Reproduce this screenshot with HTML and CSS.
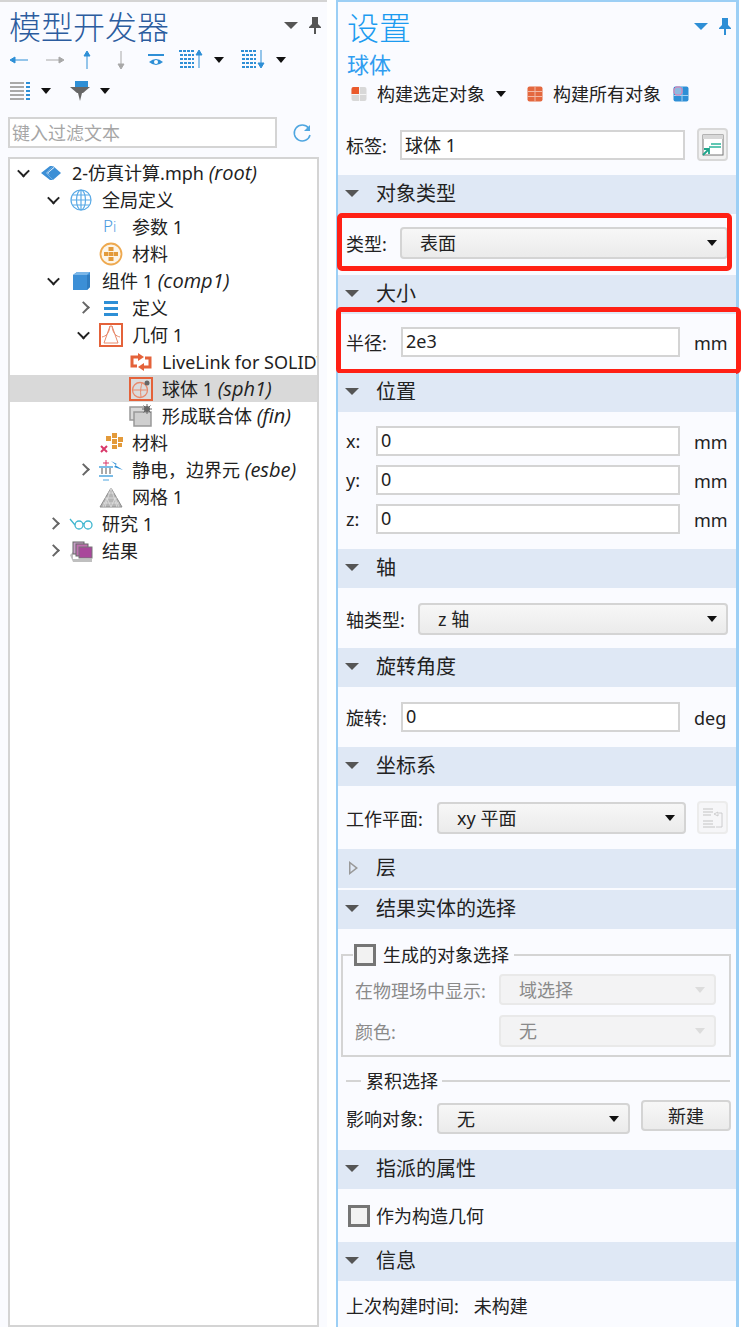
FILE: index.html
```html
<!DOCTYPE html>
<html lang="zh-CN">
<head>
    <meta charset="UTF-8">
    <title>模型开发器</title>
    <link rel="stylesheet" href="styles.css">
</head>
<body>
    <!-- Model builder -->
    <aside class="builder">
        <div class="panel-head">
            <h1 class="title title-dark">模型开发器</h1>
            <span class="head-caret"></span>
            <svg class="pin" width="12" height="17" viewBox="0 0 12 17"><path d="M3 0h6v7l3 3v1H7v6H5v-6H0v-1l3-3z" fill="#555"/></svg>
        </div>
        <div class="nav-tools">
            <svg class="nav-ic" width="18" height="10" viewBox="0 0 18 10"><path d="M18 5H5M5 5V2L0 5l5 3z" stroke="#2e8fd6" fill="#2e8fd6"/></svg>
            <svg class="nav-ic" width="18" height="10" viewBox="0 0 18 10"><path d="M0 5h13M13 5V2l5 3-5 3z" stroke="#a8a8a8" fill="#a8a8a8"/></svg>
            <svg class="nav-ic" width="10" height="18" viewBox="0 0 10 18"><path d="M5 18V5M5 5H2l3-5 3 5z" stroke="#2e8fd6" fill="#2e8fd6"/></svg>
            <svg class="nav-ic" width="10" height="18" viewBox="0 0 10 18"><path d="M5 0v13M5 13H2l3 5 3-5z" stroke="#a8a8a8" fill="#a8a8a8"/></svg>
            <svg class="nav-ic" width="16" height="12" viewBox="0 0 16 12"><path d="M0 0h16v2H0z" fill="#2e8fd6"/><path d="M1 8q7-6 14 0q-7 6-14 0z" fill="#2e8fd6"/><circle cx="8" cy="8" r="2" fill="#fff"/></svg>
            <span class="drop">
                <svg width="25" height="20" viewBox="0 0 25 20"><path d="M0 1h15M1 5h14M1 9h14M1 13h14M1 17h14" stroke="#2e8fd6" stroke-width="2" stroke-dasharray="3 1"/><path d="M20 18V5M20 5h-3l3-5 3 5z" stroke="#2e8fd6" fill="#2e8fd6"/></svg>
                <i class="caret"></i>
            </span>
            <span class="drop">
                <svg width="25" height="20" viewBox="0 0 25 20"><path d="M0 1h15M1 5h14M1 9h14M1 13h14M1 17h14" stroke="#2e8fd6" stroke-width="2" stroke-dasharray="3 1"/><path d="M20 0v13M20 13h-3l3 5 3-5z" stroke="#2e8fd6" fill="#2e8fd6"/></svg>
                <i class="caret"></i>
            </span>
            <span class="drop">
                <svg width="21" height="18" viewBox="0 0 21 18"><path d="M0 1h14M0 5h14M0 9h14M0 13h14M0 17h14" stroke="#a9a9a9" stroke-width="2"/><path d="M16 1h4M16 5h4M16 9h4M16 13h4M16 17h4" stroke="#2e8fd6" stroke-width="2"/></svg>
                <i class="caret"></i>
            </span>
            <span class="drop drop-filter">
                <svg width="20" height="20" viewBox="0 0 20 20"><path d="M5 0h13v6H5z" fill="#2e8fd6"/><path d="M0 6h20l-7 6H7z" fill="#666"/><path d="M8 12h4l-2 8z" fill="#666"/></svg>
                <i class="caret"></i>
            </span>
        </div>
        <div class="filter">
            <input class="filter-input" type="text" placeholder="键入过滤文本">
            <svg width="20" height="20" viewBox="0 0 20 20"><path d="M16.500 5A8 8 0 1 0 18 12" fill="none" stroke="#4fa6e0" stroke-width="1.500"/><path d="M18 2v6h-6z" fill="#4fa6e0"/></svg>
        </div>

        <div class="tree">
            <div class="node d0">
                <i class="chev open"></i>
                <svg class="node-ic" width="24" height="16" viewBox="0 0 24 16"><path d="M2 8l9-7 3 0-7 7 7 7h-3z" fill="#3c8fd6"/><path d="M14 1l8 7-8 7-7-7z" fill="#3c8fd6"/><path d="M8 8l7-6v1l-6 5 2 2z" fill="#fff"/></svg>
                <span>2-仿真计算.mph <em>(root)</em></span>
            </div>
            <div class="node d1">
                <i class="chev open"></i>
                <svg class="node-ic" width="24" height="24" viewBox="0 0 24 24"><g fill="none" stroke="#5aaae6" stroke-width="1.200"><circle cx="12" cy="12" r="10"/><ellipse cx="12" cy="12" rx="4.500" ry="10"/><path d="M12 2v20M2 12h20M3.500 7h17M3.500 17h17"/></g></svg>
                <span>全局定义</span>
            </div>
            <div class="node d2">
                <i class="chev none"></i>
                <span class="node-ic pi">P<small>i</small></span>
                <span>参数 1</span>
            </div>
            <div class="node d2">
                <i class="chev none"></i>
                <svg class="node-ic" width="24" height="24" viewBox="0 0 24 24"><circle cx="12" cy="12" r="10.500" fill="#fdf5e8" stroke="#eea94f" stroke-width="1.800"/><path d="M9.500 5h5v4h-5zM5 10h4.500v4H5zM10 10h4v4h-4zM14.500 10H19v4h-4.500zM9.500 15h5v4h-5z" fill="#e39a3a"/></svg>
                <span>材料</span>
            </div>
            <div class="node d1">
                <i class="chev open"></i>
                <svg class="node-ic" width="24" height="24" viewBox="0 0 24 24"><path d="M4 6l4-3h13v15l-3 3H4z" fill="#3c8fd6"/><path d="M4 6l4-3h13l-3 3z" fill="#7ab6e8"/><path d="M18 6h3v12l-3 3z" fill="#2f7cc0"/></svg>
                <span>组件 1 <em>(comp1)</em></span>
            </div>
            <div class="node d2">
                <i class="chev"></i>
                <svg class="node-ic" width="24" height="24" viewBox="0 0 24 24"><path d="M5 5h14v3H5zM5 11h14v3H5zM5 17h14v3H5z" fill="#2e8fd6"/></svg>
                <span>定义</span>
            </div>
            <div class="node d2">
                <i class="chev open"></i>
                <svg class="node-ic" width="24" height="24" viewBox="0 0 24 24"><rect x="1" y="1" width="22" height="22" fill="#fff" stroke="#e4623a" stroke-width="2"/><path d="M11 3L5 20h14L13 3zM11 3c-1 8-4 10-8 11M13 3c1 8 4 10 8 11" fill="none" stroke="#e88a6c"/></svg>
                <span>几何 1</span>
            </div>
            <div class="node d3">
                <i class="chev none"></i>
                <svg class="node-ic" width="24" height="20" viewBox="0 0 24 20"><path d="M10 5H3v9h5M14 15h7V6h-5" fill="none" stroke="#e4623a" stroke-width="3"/><path d="M9 1l6 4-6 4zM15 11l-6 4 6 4z" fill="#e4623a"/></svg>
                <span>LiveLink for SOLIDWORKS</span>
            </div>
            <div class="node d3 selected">
                <i class="chev none"></i>
                <svg class="node-ic" width="24" height="24" viewBox="0 0 24 24"><rect x="1" y="1" width="22" height="22" fill="#dcdcdc" stroke="#e4623a" stroke-width="2"/><circle cx="11" cy="13" r="7.500" fill="none" stroke="#e88a6c" stroke-width="1.300"/><path d="M3.500 13h15M13 6c-1 3-2 8-1 14" fill="none" stroke="#e88a6c"/><circle cx="18" cy="6" r="2.500" fill="#666"/></svg>
                <span>球体 1 <em>(sph1)</em></span>
            </div>
            <div class="node d3">
                <i class="chev none"></i>
                <svg class="node-ic" width="24" height="24" viewBox="0 0 24 24"><rect x="1" y="3" width="15" height="13" fill="#d9d9d9" stroke="#999" stroke-width="1.500"/><rect x="5" y="8" width="17" height="14" fill="#cfcfcf" stroke="#999" stroke-width="1.500"/><circle cx="18" cy="5" r="3" fill="#666"/><path d="M18 0v10M13 5h10M14.500 1.500l7 7M21.500 1.500l-7 7" stroke="#666"/></svg>
                <span>形成联合体 <em>(fin)</em></span>
            </div>
            <div class="node d2">
                <i class="chev none"></i>
                <svg class="node-ic" width="24" height="24" viewBox="0 0 24 24"><path d="M7 5h5v5H7zM13 2h5v5h-5zM19 6h5v5h-5zM13 8h5v5h-5zM19 12h4v4h-4zM13 14h5v4h-5z" fill="#e39a3a"/><path d="M2 15l6 6M8 15l-6 6" stroke="#d9386a" stroke-width="2"/></svg>
                <span>材料</span>
            </div>
            <div class="node d2">
                <i class="chev"></i>
                <svg class="node-ic" width="24" height="24" viewBox="0 0 24 24"><path d="M4 5h6M7 2v6" stroke="#d9386a"/><path d="M0 9h14M0 18h14" stroke="#4fa6e0" stroke-width="1.300"/><path d="M3 10v6M7 10v6M11 10v6" stroke="#555"/><path d="M4 22h6" stroke="#4fa6e0"/><path d="M12 3l6 3-2 1 8 5-9-3 2-2z" fill="#2e8fd6"/></svg>
                <span>静电，边界元 <em>(esbe)</em></span>
            </div>
            <div class="node d2">
                <i class="chev none"></i>
                <svg class="node-ic" width="24" height="24" viewBox="0 0 24 24"><path d="M12 3L1 22h22z" fill="#b5b5b5" stroke="#8c8c8c"/><path d="M9 8h6M6 13h12M4 18h16M12 3L6 22M12 3l6 19M8 13l-4 9M16 13l4 9M8 13l4 9M16 13l-4 9" stroke="#e4e4e4" stroke-width=".7" fill="none"/></svg>
                <span>网格 1</span>
            </div>
            <div class="node d1">
                <i class="chev"></i>
                <svg class="node-ic" width="24" height="16" viewBox="0 0 24 16"><g fill="none" stroke="#3fb6cf" stroke-width="1.300"><circle cx="10" cy="9" r="4"/><circle cx="19" cy="9" r="4"/><path d="M14 8q1-1 1 0M6 9L1 3"/></g></svg>
                <span>研究 1</span>
            </div>
            <div class="node d1">
                <i class="chev"></i>
                <svg class="node-ic" width="24" height="24" viewBox="0 0 24 24"><path d="M1 16l3-3v7h19v3H4z" fill="#bfbfbf"/><rect x="4" y="3" width="11" height="12" fill="#c8a0c8" stroke="#666"/><rect x="7" y="5" width="12" height="12" fill="#c070b0" stroke="#666"/><rect x="10" y="8" width="13" height="11" fill="#a9479b" stroke="#777"/></svg>
                <span>结果</span>
            </div>
        </div>
    </aside>

    <!-- Settings -->
    <main class="settings">
        <div class="panel-head panel-head-blue">
            <h1 class="title">设置</h1>
            <span class="head-caret blue"></span>
            <svg class="pin" width="12" height="17" viewBox="0 0 12 17"><path d="M3 0h6v7l3 3v1H7v6H5v-6H0v-1l3-3z" fill="#2e8fd6"/></svg>
        </div>
        <div class="subtitle">球体</div>
        <div class="build-tools">
            <svg width="16" height="16" viewBox="0 0 16 16"><rect x="0.500" y="1" width="15" height="14" rx="2" fill="#d8d8d8"/><path d="M0.500 3a2 2 0 0 1 2-2H8v7H0.500z" fill="#ea5a2c"/><path d="M0.500 8.500h15M8.500 1v14" stroke="#f4f4f4"/></svg>
            <span class="build-label">构建选定对象</span>
            <i class="caret"></i>
            <svg class="build-all" width="16" height="16" viewBox="0 0 16 16"><rect x="0.500" y="0.500" width="15" height="15" rx="2" fill="#e4683f"/><path d="M0.500 5.500h15M0.500 10.500h15M8 0.500v15" stroke="#f2b8a4"/></svg>
            <span class="build-label">构建所有对象</span>
            <svg class="build-last" width="16" height="16" viewBox="0 0 16 16"><rect x="0.500" y="0.500" width="15" height="15" rx="2" fill="#2e8fd6"/><path d="M0.500 9.500h15M9 0.500v15" stroke="#a5d0f0"/><path d="M1 3l2-2h4l2 2v4l-2 2H3L1 7z" fill="#8fb8e0" stroke="#e874a8"/></svg>
        </div>
        <div class="row label-row">
            <label class="lab lab-2">标签:</label>
            <input class="field" type="text" value="球体 1">
            <button class="icon-btn">
                <svg width="22" height="22" viewBox="0 0 22 22"><rect x="1" y="1" width="20" height="20" fill="#fff" stroke="#777"/><path d="M1 1h20v4H1z" fill="#d8d8d8"/><path d="M9 10h10M7 13h12" stroke="#2db59b" stroke-width="1.300"/><path d="M1 21l5-5M2 15h5v5" stroke="#1fa58b" stroke-width="1.800" fill="none"/></svg>
            </button>
        </div>

        <section>
            <h2 class="sec-head"><i class="tri"></i>对象类型</h2>
            <div class="sec-body body-type">
                <div class="row">
                    <label class="lab lab-2">类型:</label>
                    <div class="select grow"><span>表面</span><i class="caret"></i></div>
                </div>
                <div class="mark mark-type"></div>
            </div>
        </section>

        <section>
            <h2 class="sec-head"><i class="tri"></i>大小</h2>
            <div class="sec-body body-size">
                <div class="row">
                    <label class="lab lab-2b">半径:</label>
                    <input class="field" type="text" value="2e3">
                    <span class="unit">mm</span>
                </div>
                <div class="mark mark-size"></div>
            </div>
        </section>

        <section>
            <h2 class="sec-head"><i class="tri"></i>位置</h2>
            <div class="sec-body body-pos">
                <div class="row"><label class="lab lab-1">x:</label><input class="field" type="text" value="0"><span class="unit">mm</span></div>
                <div class="row"><label class="lab lab-1">y:</label><input class="field" type="text" value="0"><span class="unit">mm</span></div>
                <div class="row"><label class="lab lab-1">z:</label><input class="field" type="text" value="0"><span class="unit">mm</span></div>
            </div>
        </section>

        <section>
            <h2 class="sec-head"><i class="tri"></i>轴</h2>
            <div class="sec-body body-axis">
                <div class="row">
                    <label class="lab lab-3">轴类型:</label>
                    <div class="select grow"><span>z 轴</span><i class="caret"></i></div>
                </div>
            </div>
        </section>

        <section>
            <h2 class="sec-head"><i class="tri"></i>旋转角度</h2>
            <div class="sec-body body-rot">
                <div class="row">
                    <label class="lab lab-2b">旋转:</label>
                    <input class="field" type="text" value="0">
                    <span class="unit">deg</span>
                </div>
            </div>
        </section>

        <section>
            <h2 class="sec-head"><i class="tri"></i>坐标系</h2>
            <div class="sec-body body-coord">
                <div class="row">
                    <label class="lab lab-4">工作平面:</label>
                    <div class="select grow"><span>xy 平面</span><i class="caret"></i></div>
                    <button class="icon-btn faded">
                        <svg width="22" height="22" viewBox="0 0 22 22"><path d="M1 2h10M1 5h10M1 8h8M1 14h10M1 17h10M1 20h12" stroke="#c4c4c4"/><path d="M20 6v14h-6M20 6h-3M12 7l4-2v4z" stroke="#c4c4c4" fill="none" stroke-width=".8"/></svg>
                    </button>
                </div>
            </div>
        </section>

        <section>
            <h2 class="sec-head sec-closed"><i class="tri-closed"></i>层</h2>
        </section>

        <section>
            <h2 class="sec-head"><i class="tri"></i>结果实体的选择</h2>
            <div class="sec-body body-result">
                <fieldset class="group">
                    <legend class="group-title"><i class="check"></i>生成的对象选择</legend>
                    <div class="row muted">
                        <label class="lab lab-dis">在物理场中显示:</label>
                        <div class="select grow disabled"><span>域选择</span><i class="caret"></i></div>
                    </div>
                    <div class="row muted row-tall">
                        <label class="lab lab-dis">颜色:</label>
                        <div class="select grow disabled"><span>无</span><i class="caret"></i></div>
                    </div>
                </fieldset>
                <div class="divider"><span>累积选择</span></div>
                <div class="row row-top">
                    <label class="lab lab-4">影响对象:</label>
                    <div class="select grow"><span>无</span><i class="caret"></i></div>
                    <button class="new-btn">新建</button>
                </div>
            </div>
        </section>

        <section>
            <h2 class="sec-head"><i class="tri"></i>指派的属性</h2>
            <div class="sec-body body-assign">
                <i class="check"></i>作为构造几何
            </div>
        </section>

        <section>
            <h2 class="sec-head"><i class="tri"></i>信息</h2>
            <div class="sec-body body-info">
                <span class="info-key">上次构建时间:</span><span>未构建</span>
            </div>
        </section>
    </main>
</body>
</html>
```

FILE: styles.css
```css
* {
    box-sizing: border-box;
}
body {
    margin: 0;
    width: 744px;
    height: 1327px;
    overflow: hidden;
    display: flex;
    background-color: #fff;
    color: #222;
    font-family: "Noto Sans", "Noto Sans CJK SC", sans-serif;
    font-size: 18px;
    line-height: 26px;
}
i {
    display: block;
    font-style: normal;
}
input, button {
    font: inherit;
    color: inherit;
}

/* left panel */
.builder {
    width: 327px;
    height: 1327px;
    margin-right: 9px;
    padding-left: 8px;
    border-top: 2px solid #d4d4d4;
    background-color: #fafbff;
    display: flex;
    flex-direction: column;
}
.panel-head {
    height: 46px;
    display: flex;
    align-items: center;
    padding-right: 6px;
}
.title {
    flex: 1;
    margin: 4px 0 0;
    padding-left: 1px;
    font-size: 32px;
    font-weight: 300;
    line-height: 46px;
    color: #1c9bf0;
}
.title-dark {
    color: #2b5c9e;
}
.head-caret {
    width: 0;
    height: 0;
    border-left: 7px solid transparent;
    border-right: 7px solid transparent;
    border-top: 7px solid #555;
    margin-right: 11px;
}
.head-caret.blue {
    border-top-color: #2e8fd6;
}
.nav-tools {
    width: 300px;
    display: flex;
    flex-wrap: wrap;
    align-items: center;
    row-gap: 11px;
    padding: 2px 0 0 2px;
}
.nav-ic {
    margin-right: 18px;
}
.nav-ic:nth-child(3) {
    margin-right: 24px;
}
.nav-ic:nth-child(4) {
    margin-right: 22px;
}
.nav-ic:nth-child(5) {
    margin-right: 15px;
}
.drop {
    display: flex;
    align-items: center;
    height: 20px;
    margin-right: 17px;
}
.drop svg {
    margin-right: 10px;
}
.drop-filter {
    margin-left: 2px;
}
.caret {
    flex: none;
    width: 0;
    height: 0;
    border-left: 5px solid transparent;
    border-right: 5px solid transparent;
    border-top: 6px solid #111;
}
.filter {
    display: flex;
    align-items: center;
    gap: 15px;
    margin-top: 16px;
}
.filter-input {
    width: 269px;
    height: 31px;
    padding: 0 2px;
    border: 2px solid #d4d4d4;
    background-color: #fff;
}
.filter-input::placeholder {
    color: #a6a6a6;
}

/* tree */
.tree {
    flex: 1;
    width: 311px;
    margin-top: 9px;
    border: 2px solid #d4d4d4;
    background-color: #fff;
    overflow: hidden;
}
.node {
    height: 27px;
    display: flex;
    align-items: center;
    white-space: nowrap;
}
.node em {
    font-family: "Open Sans", sans-serif;
    font-size: 20px;
    font-style: italic;
}
.d0 { padding-left: 7px; }
.d1 { padding-left: 37px; }
.d2 { padding-left: 67px; }
.d3 { padding-left: 97px; }
.node.selected {
    background-color: #d9d9d9;
}
.chev {
    width: 9px;
    height: 9px;
    margin: 0 9px 0 2px;
    flex: none;
    border-right: 2px solid #666;
    border-bottom: 2px solid #666;
    transform: rotate(-45deg);
}
.chev.open {
    border-color: #222;
    transform: rotate(45deg) translate(-1px, -1px);
}
.chev.none {
    visibility: hidden;
}
.node-ic {
    flex: none;
    width: 24px;
    margin: 0 9px 0 2px;
}
.pi {
    font-size: 17px;
    font-weight: 300;
    color: #4a9be0;
    padding-left: 4px;
}
.pi small {
    font-size: 14px;
}

/* right panel */
.settings {
    width: 403px;
    height: 1327px;
    border: solid #9ccff5;
    border-width: 2px 3px 0 2px;
    background-color: #fafbff;
}
.panel-head-blue {
    height: 48px;
    padding-left: 8px;
    padding-right: 5px;
}
.subtitle {
    height: 30px;
    padding-left: 9px;
    font-size: 22px;
    line-height: 28px;
    color: #2f9df0;
}
.build-tools {
    height: 30px;
    padding: 0 0 2px 13px;
    display: flex;
    align-items: center;
}
.build-label {
    margin-left: 10px;
    margin-right: 11px;
}
.build-all {
    margin-left: 21px;
}
.build-last {
    margin-left: 1px;
}
.row {
    display: flex;
    align-items: center;
    min-height: 30px;
    padding: 0 8px;
}
.label-row {
    margin-top: 18px;
    margin-bottom: 14px;
}
.lab {
    flex: none;
    padding-top: 2px;
}
.lab-1 { width: 30px; padding-top: 0; }
.lab-2 { width: 54px; }
.lab-2b { width: 55px; }
.lab-3 { width: 72px; }
.lab-4 { width: 91px; }
.lab-dis { width: 144px; }
.field {
    flex: 1;
    min-width: 0;
    height: 30px;
    padding: 0 3px 2px;
    border: 2px solid #d4d4d4;
    background-color: #fff;
}
.unit {
    margin-left: 14px;
    width: 34px;
    padding-top: 1px;
}
.icon-btn {
    width: 31px;
    height: 33px;
    margin-left: 12px;
    padding: 0;
    flex: none;
    display: flex;
    align-items: center;
    justify-content: center;
    border: 2px solid #d8d8d8;
    border-radius: 4px;
    background-color: #f1f1f1;
}
.icon-btn.faded {
    margin-left: 11px;
    border-color: #ececec;
    background-color: #f6f6f8;
}

/* sections */
.sec-head {
    height: 39px;
    margin: 0;
    padding: 0 0 2px 38px;
    display: flex;
    align-items: center;
    font-size: 20px;
    font-weight: 400;
    background-color: #dfe8f5;
    position: relative;
}
.sec-closed {
    margin-bottom: 2px;
}
.tri {
    position: absolute;
    left: 7px;
    top: 15px;
    width: 0;
    height: 0;
    border-left: 7px solid transparent;
    border-right: 7px solid transparent;
    border-top: 7px solid #555;
}
.tri-closed {
    position: absolute;
    left: 11px;
    top: 12px;
    width: 9px;
    height: 14px;
    background-color: #999;
    clip-path: polygon(0 0, 100% 50%, 0 100%, 0 0, 1.500px 3px, 1.500px 11px, 6.500px 7px, 1.500px 3px);
}
.sec-body {
    position: relative;
}
.body-type { padding: 13px 0 16px; }
.body-size { padding: 13px 0 16px; }
.body-pos { padding: 14px 0 15px; display: flex; flex-direction: column; gap: 9px; }
.body-axis { padding: 15px 0 13px; }
.body-rot { padding: 15px 0 15px; }
.body-coord { padding: 15px 0 15px; }
.body-result { padding: 15px 0 16px; }
.body-assign {
    height: 53px;
    padding: 0 0 0 10px;
    display: flex;
    align-items: center;
    gap: 6px;
}
.body-info {
    padding: 12px 8px;
}
.info-key {
    margin-right: 15px;
}
.select {
    height: 32px;
    padding: 0 9px 0 18px;
    display: flex;
    align-items: center;
    justify-content: space-between;
    border: 2px solid #d4d4d4;
    border-radius: 4px;
    background: linear-gradient(#f7f7f7, #ebebeb);
}
.grow {
    flex: 1;
}
.select.disabled {
    height: 31px;
    border-color: #e9e9e9;
    background: #f3f3f4;
}
.select.disabled .caret {
    border-top-color: #dcdcdc;
}
.muted {
    color: #8a8a8a;
    min-height: 31px;
    padding: 0 13px 0 12px;
}
.row-tall {
    min-height: 32px;
    margin-top: 10px;
}
.row-tall .select.disabled {
    height: 32px;
}
.check {
    flex: none;
    width: 22px;
    height: 22px;
    border: 3px solid #757575;
    background-color: #f2f2f2;
}

/* group box */
.group {
    margin: 0 5px 0 3px;
    padding: 8px 0 8px;
    border: 2px solid #d4d4d4;
    min-width: 0;
}
.group-title {
    display: flex;
    align-items: center;
    gap: 7px;
    height: 22px;
    margin-left: 10px;
    padding: 0 5px 0 1px;
}
.divider {
    margin: 13px 6px 8px 8px;
    height: 22px;
    display: flex;
    align-items: center;
    gap: 4px;
}
.divider::before {
    content: "";
    width: 15px;
    height: 2px;
    margin-right: 1px;
    background-color: #d4d4d4;
}
.divider::after {
    content: "";
    flex: 1;
    height: 2px;
    background-color: #d4d4d4;
}
.row-top {
    height: 34px;
    padding-right: 5px;
    align-items: flex-end;
}
.row-top .select {
    height: 31px;
}
.row-top .lab {
    align-self: center;
    padding-top: 3px;
}
.new-btn {
    width: 90px;
    height: 31px;
    margin-left: 11px;
    align-self: flex-start;
    padding: 0;
    border: 2px solid #d4d4d4;
    border-radius: 4px;
    background: linear-gradient(#f7f7f7, #ebebeb);
}

/* red highlight boxes */
.mark {
    position: absolute;
    border: 5px solid #ff2015;
    border-radius: 5px;
    pointer-events: none;
}
.mark-type {
    left: -1px;
    top: -1px;
    width: 395px;
    height: 58px;
}
.mark-size {
    left: -2px;
    top: -7px;
    width: 405px;
    height: 67px;
}
```
